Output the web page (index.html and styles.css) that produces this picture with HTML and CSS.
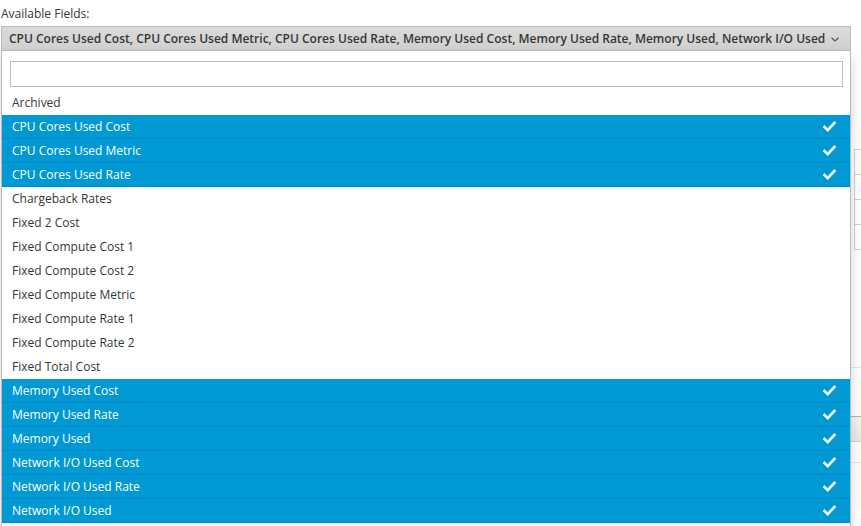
FILE: index.html
```html
<!DOCTYPE html>
<html>
<head>
<meta charset="utf-8">
<link rel="stylesheet" href="styles.css">
</head>
<body>
<div class="field">
  <label class="label">Available Fields:</label>
  <div class="dropdown">
    <button class="toggle"><span class="toggle-text">CPU Cores Used Cost, CPU Cores Used Metric, CPU Cores Used Rate, Memory Used Cost, Memory Used Rate, Memory Used, Network I/O Used</span><svg class="caret" width="8" height="5" viewBox="0 0 8 5"><path d="M0.5 0.8 L4 4 L7.5 0.8" fill="none" stroke="#4d5258" stroke-width="1.2"/></svg></button>
    <div class="menu">
      <div class="search"><input class="search-input" type="text"></div>
      <ul class="options">
        <li class="opt">Archived</li>
        <li class="opt sel">CPU Cores Used Cost<svg class="check" viewBox="0 0 14 12"><path d="M1.5 6.5 L5 10 L12.5 2" fill="none" stroke="#fff" stroke-width="2.8" stroke-linecap="square"/></svg></li>
        <li class="opt sel">CPU Cores Used Metric<svg class="check" viewBox="0 0 14 12"><path d="M1.5 6.5 L5 10 L12.5 2" fill="none" stroke="#fff" stroke-width="2.8" stroke-linecap="square"/></svg></li>
        <li class="opt sel">CPU Cores Used Rate<svg class="check" viewBox="0 0 14 12"><path d="M1.5 6.5 L5 10 L12.5 2" fill="none" stroke="#fff" stroke-width="2.8" stroke-linecap="square"/></svg></li>
        <li class="opt">Chargeback Rates</li>
        <li class="opt">Fixed 2 Cost</li>
        <li class="opt">Fixed Compute Cost 1</li>
        <li class="opt">Fixed Compute Cost 2</li>
        <li class="opt">Fixed Compute Metric</li>
        <li class="opt">Fixed Compute Rate 1</li>
        <li class="opt">Fixed Compute Rate 2</li>
        <li class="opt">Fixed Total Cost</li>
        <li class="opt sel">Memory Used Cost<svg class="check" viewBox="0 0 14 12"><path d="M1.5 6.5 L5 10 L12.5 2" fill="none" stroke="#fff" stroke-width="2.8" stroke-linecap="square"/></svg></li>
        <li class="opt sel">Memory Used Rate<svg class="check" viewBox="0 0 14 12"><path d="M1.5 6.5 L5 10 L12.5 2" fill="none" stroke="#fff" stroke-width="2.8" stroke-linecap="square"/></svg></li>
        <li class="opt sel">Memory Used<svg class="check" viewBox="0 0 14 12"><path d="M1.5 6.5 L5 10 L12.5 2" fill="none" stroke="#fff" stroke-width="2.8" stroke-linecap="square"/></svg></li>
        <li class="opt sel">Network I/O Used Cost<svg class="check" viewBox="0 0 14 12"><path d="M1.5 6.5 L5 10 L12.5 2" fill="none" stroke="#fff" stroke-width="2.8" stroke-linecap="square"/></svg></li>
        <li class="opt sel">Network I/O Used Rate<svg class="check" viewBox="0 0 14 12"><path d="M1.5 6.5 L5 10 L12.5 2" fill="none" stroke="#fff" stroke-width="2.8" stroke-linecap="square"/></svg></li>
        <li class="opt sel">Network I/O Used<svg class="check" viewBox="0 0 14 12"><path d="M1.5 6.5 L5 10 L12.5 2" fill="none" stroke="#fff" stroke-width="2.8" stroke-linecap="square"/></svg></li>
        <li class="opt"></li>
      </ul>
    </div>
  </div>
</div>
<div class="behind">
  <table class="grid">
    <tr><td></td></tr>
    <tr><td></td></tr>
    <tr><td></td></tr>
    <tr><td></td></tr>
  </table>
  <div class="rule light"></div>
  <div class="bar"></div>
  <div class="rule light2"></div>
</div>
</body>
</html>
```
FILE: styles.css
```css
html, body {
  margin: 0;
  padding: 0;
  background: #fff;
  overflow: hidden;
}
body {
  font-family: "Open Sans", "Liberation Sans", sans-serif;
  font-size: 12px;
  color: #363636;
  width: 861px;
  height: 526px;
}
.field {
  padding: 6px 0 0 1px;
}
.label {
  display: block;
  height: 20px;
  line-height: 16px;
}
.dropdown {
  position: relative;
  width: 850px;
}
.toggle {
  display: flex;
  align-items: center;
  width: 850px;
  height: 25px;
  margin: 0;
  padding: 0 0 0 7px;
  border: 1px solid #bbb;
  background: linear-gradient(#dadada, #d1d1d1);
  font-family: inherit;
  font-size: 12px;
  font-weight: 600;
  color: #363636;
  text-align: left;
  white-space: nowrap;
}
.toggle-text {
  flex: none;
}
.caret {
  margin-left: 6px;
  margin-top: 2px;
}
.menu {
  position: absolute;
  top: 25px;
  left: 0;
  width: 848px;
  background: #fff;
  border: 1px solid #bbb;
  border-top: none;
  box-shadow: 0 6px 12px rgba(0, 0, 0, 0.175);
  z-index: 2;
}
.search {
  padding: 10px 7px 4px 8px;
}
.search-input {
  display: block;
  box-sizing: border-box;
  width: 100%;
  height: 26px;
  margin: 0;
  border: 1px solid #bbb;
  background: #fff;
}
.options {
  list-style: none;
  margin: 0;
  padding: 0;
}
.opt {
  display: flex;
  align-items: center;
  justify-content: space-between;
  box-sizing: border-box;
  height: 24px;
  padding: 0 14px 2px 10px;
  color: #363636;
}
.opt.sel {
  background: #0099d3;
  color: #fff;
  border-bottom: 1px solid #0088ce;
  padding-bottom: 1px;
}
.check {
  width: 13px;
  height: 11px;
}
.behind {
  padding-left: 854px;
}
.grid {
  border-collapse: collapse;
  margin-top: 98px;
  width: 20px;
}
.grid td {
  height: 24px;
  padding: 0;
  border: 1px solid #d1d1d1;
}
.rule {
  margin-left: -3px;
  height: 1px;
}
.rule.light {
  margin-top: 117px;
  background: #e6e6e6;
}
.bar {
  margin-left: -3px;
  margin-top: 48px;
  height: 24px;
  border-top: 1px solid #b5b5b5;
  border-bottom: 1px solid #d1d1d1;
  background: linear-gradient(#f5f5f5, #e8e8e8);
}
.rule.light2 {
  margin-top: 20px;
  background: #e6e6e6;
}
```
